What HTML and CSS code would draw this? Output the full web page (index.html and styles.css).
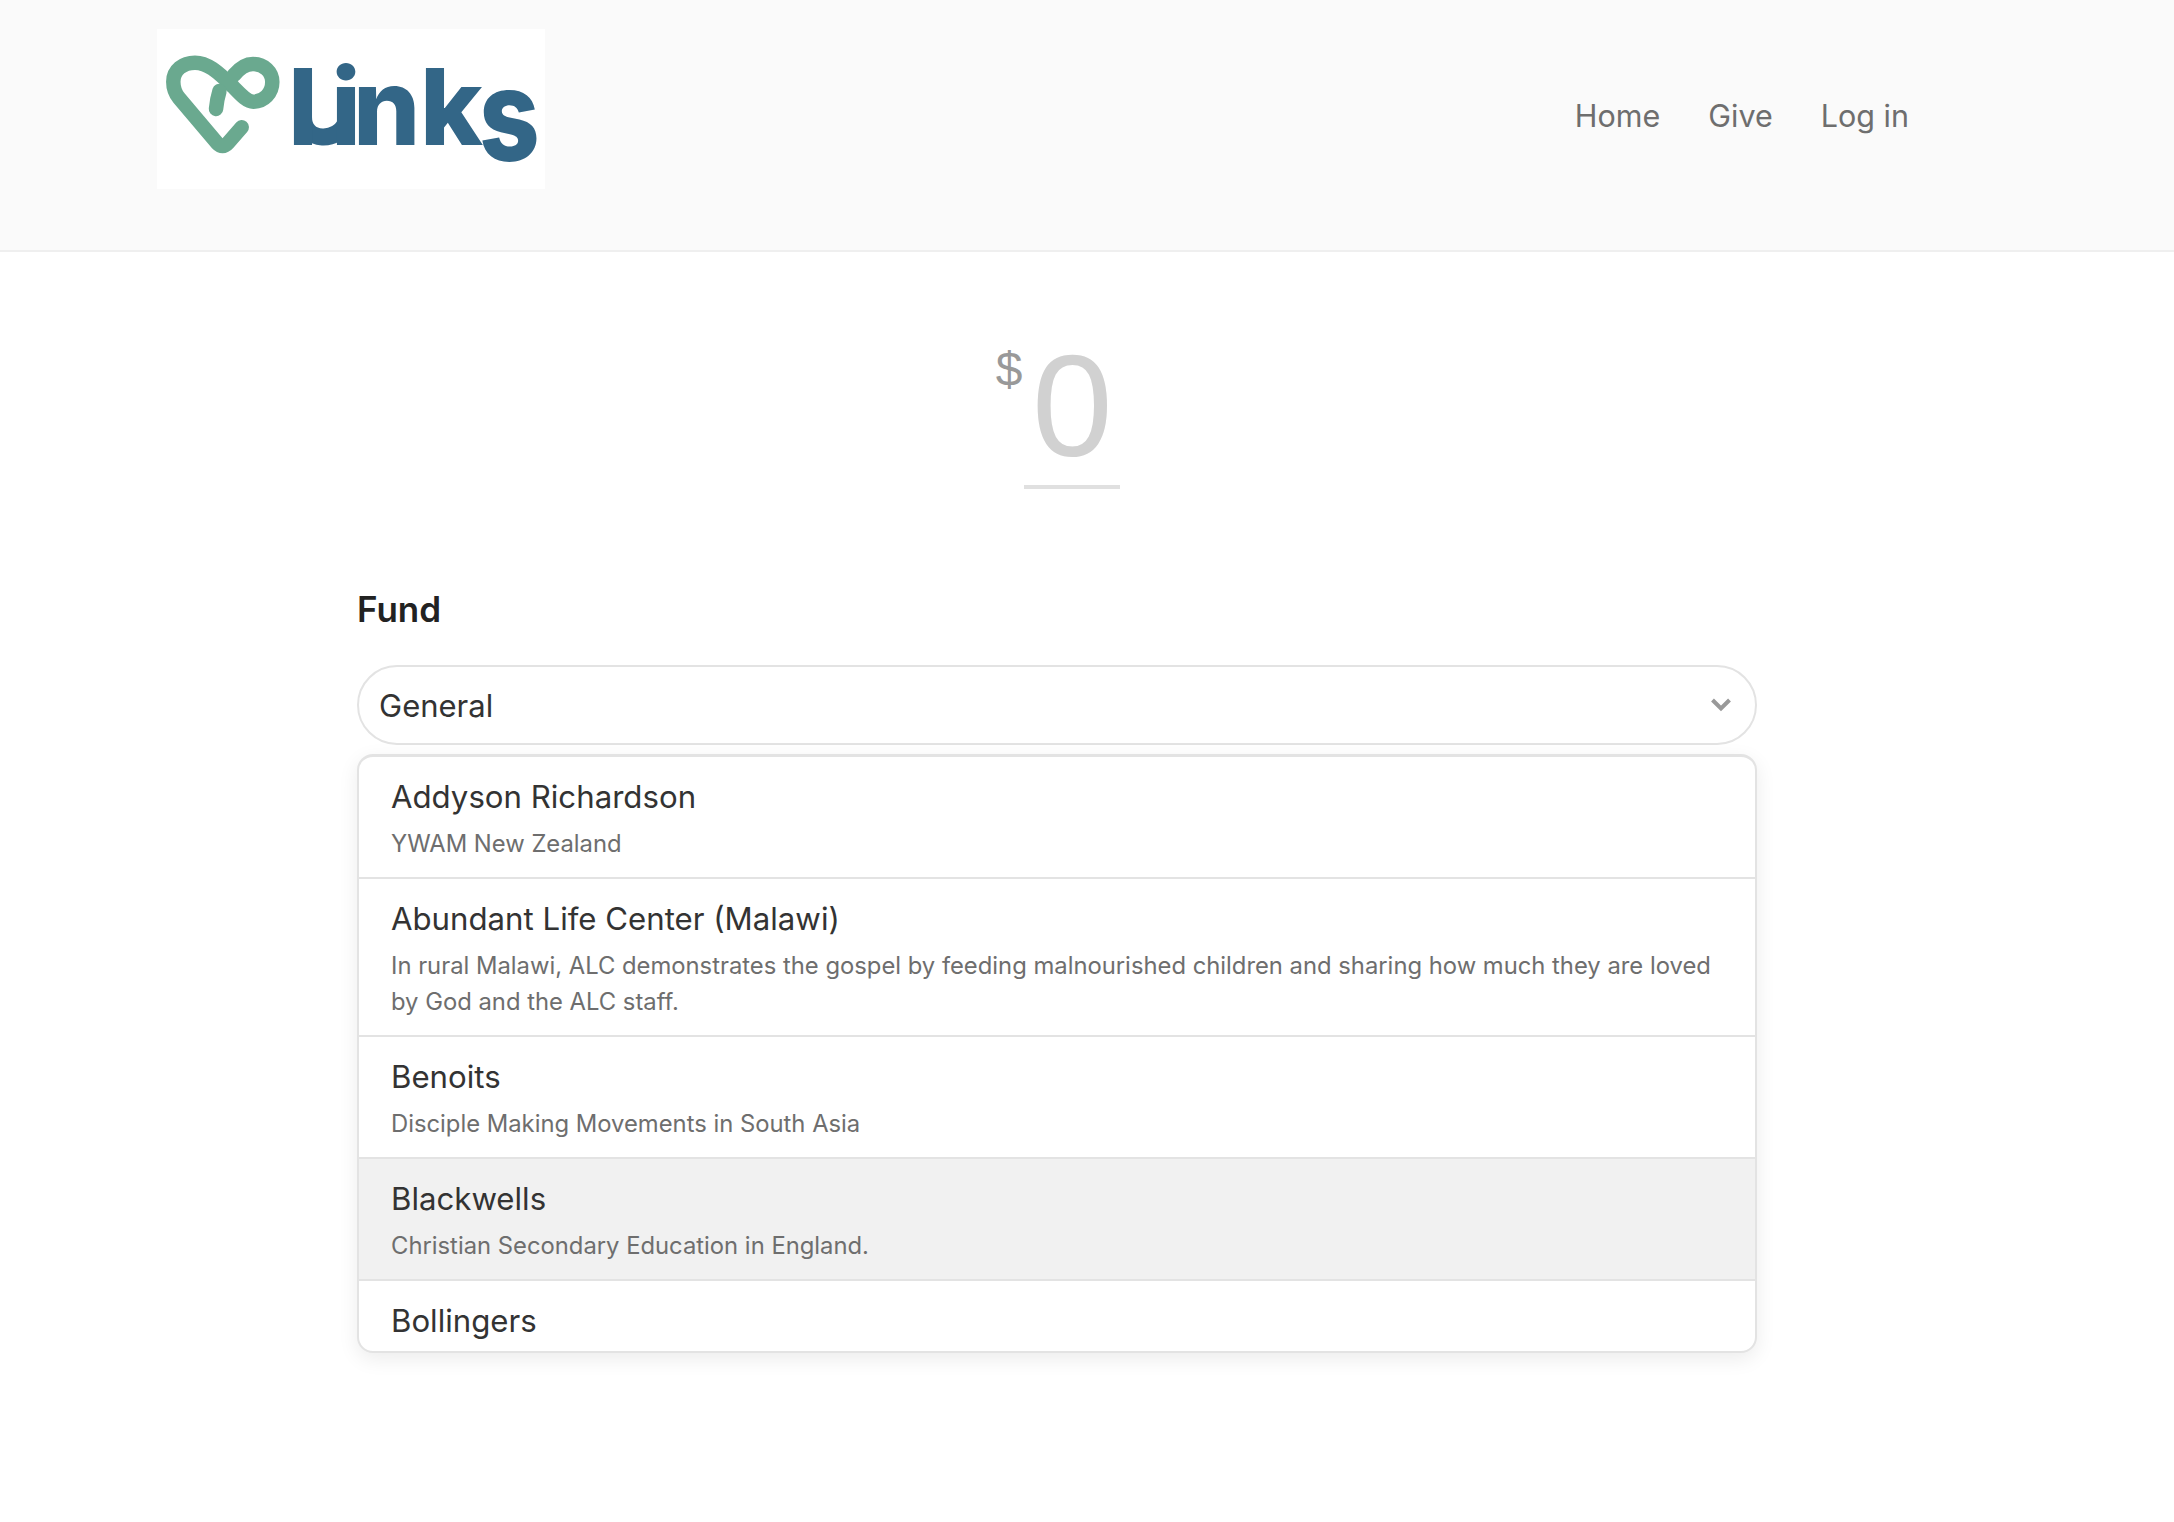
FILE: index.html
```html
<!DOCTYPE html>
<html lang="en">
<head>
<meta charset="utf-8">
<title>Give</title>
<link rel="stylesheet" href="styles.css">
</head>
<body>
<header class="site-header">
  <a class="logo" href="#">
    <svg class="logo-svg" width="388" height="160" viewBox="0 0 388 160">
      <rect width="388" height="160" fill="#fff"/>
      <g fill="none" stroke="#6aa98f" stroke-width="14.5">
        <path stroke-linecap="round" d="M84.7 98.3 L71 114 Q65.7 120 60 114 L22 69 Q16.3 62 16.3 52.7 C16.3 41 26 33.7 38 33.7 C50 33.7 60 42 76.3 58 C84 66 90 72.7 96.3 72.7 C107 72.7 115.3 64 115.3 53 C115.3 43 107 35 96 35 C88 35 82 40 77 46"/>
        <path stroke-linecap="round" d="M62.5 62 Q60 70 59 80"/>
      </g>
      <path d="M146.5 88 C146.5 114 182 114 189.5 92" fill="none" stroke="#336687" stroke-width="17"/>
      <text class="logo-text" x="131 174 196 263" y="116">link</text>
      <text class="logo-text" transform="translate(322 132) scale(1 1.22)">s</text>
    </svg>
  </a>
  <nav class="nav">
    <a href="#">Home</a>
    <a href="#">Give</a>
    <a href="#">Log in</a>
  </nav>
</header>
<main class="main">
  <div class="amount">
    <span class="currency">$</span>
    <span class="value">0</span>
  </div>
  <div class="fund-label">Fund</div>
  <div class="select">
    <span>General</span>
    <svg class="chevron" width="20" height="14" viewBox="0 0 20 14"><path d="M1.5 2 L10 10.5 L18.5 2" fill="none" stroke="#999" stroke-width="4"/></svg>
  </div>
  <div class="menu">
    <div class="item">
      <div class="name">Addyson Richardson</div>
      <div class="desc">YWAM New Zealand</div>
    </div>
    <div class="item">
      <div class="name">Abundant Life Center (Malawi)</div>
      <div class="desc">In rural Malawi, ALC demonstrates the gospel by feeding malnourished children and sharing how much they are loved by God and the ALC staff.</div>
    </div>
    <div class="item">
      <div class="name">Benoits</div>
      <div class="desc">Disciple Making Movements in South Asia</div>
    </div>
    <div class="item active">
      <div class="name">Blackwells</div>
      <div class="desc">Christian Secondary Education in England.</div>
    </div>
    <div class="item">
      <div class="name">Bollingers</div>
    </div>
  </div>
</main>
</body>
</html>
```
FILE: styles.css
```css
* { box-sizing: border-box; }
html, body { margin: 0; padding: 0; background: #fff; }
body { font-family: Inter, "Liberation Sans", sans-serif; color: #333; height: 1522px; overflow: hidden; }
a { text-decoration: none; color: inherit; }

.site-header {
  height: 252px;
  background: #fafafa;
  border-bottom: 2px solid #efefef;
  padding: 29px 241px 0 157px;
  display: flex;
  align-items: flex-start;
  justify-content: space-between;
}
.logo { display: block; height: 160px; }
.logo-svg { display: block; }
.logo-text { font-family: Inter, sans-serif; font-weight: 800; font-size: 106px; fill: #336687; }
.nav { display: flex; margin-top: 67px; font-size: 30.5px; line-height: 40px; color: #6e6e6e; }
.nav a { padding: 0 24px; }

.main { width: 1400px; margin-left: 357px; }
.amount { display: flex; justify-content: center; padding-left: 2px; padding-top: 86px; height: 236px; font-family: "Liberation Sans", Arial, sans-serif; }
.currency { font-size: 48px; line-height: 56px; color: #999; margin-top: 4px; margin-right: 2px; }
.value { display: block; width: 96px; height: 151px; text-align: center; font-size: 145px; line-height: 136px; color: #d1d1d1; border-bottom: 4px solid #e0e0e0; font-weight: 400; }

.fund-label { font-size: 35px; line-height: 40px; font-weight: 600; color: #222; margin-top: 101px; }
.select {
  margin-top: 36px;
  height: 80px;
  border: 2px solid #e3e3e3;
  border-radius: 40px;
  padding: 0 24px 0 20px;
  display: flex;
  align-items: center;
  justify-content: space-between;
  font-size: 31px;
  color: #333;
}
.chevron { display: block; }

.menu {
  margin-top: 9px;
  height: 599px;
  overflow: hidden;
  border: 2px solid #e3e3e3;
  border-top-width: 3px;
  border-radius: 16px;
  background: #fff;
  box-shadow: 0 6px 20px rgba(0, 0, 0, 0.08);
}
.item { padding: 21px 32px 15px; border-bottom: 2px solid #e3e3e3; }
.item:last-child { border-bottom: 0; padding-bottom: 0; }
.item.active { background: #f1f1f1; }
.name { font-size: 31.2px; line-height: 38px; color: #333; font-weight: 400; }
.desc { font-size: 23.8px; line-height: 36px; color: #6e6e6e; margin-top: 10px; }
```
